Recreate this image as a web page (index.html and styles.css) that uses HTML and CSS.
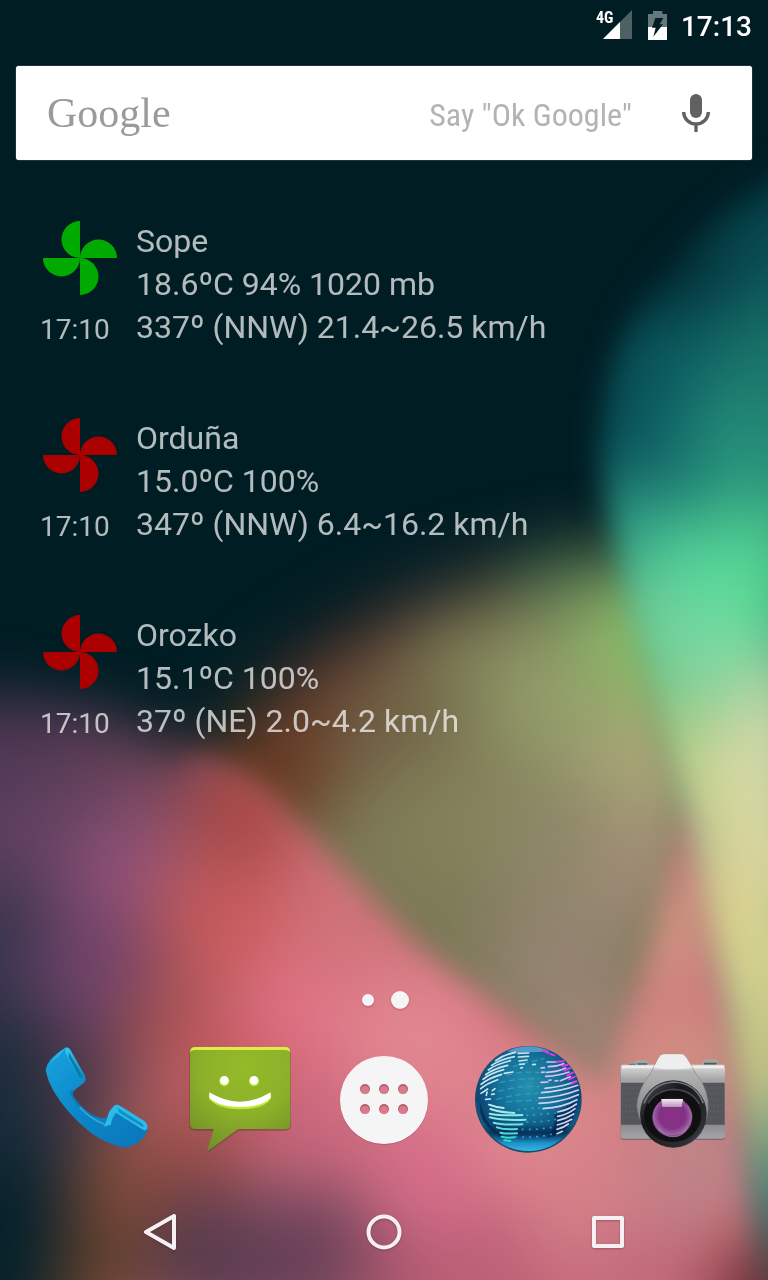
FILE: index.html
```html
<!DOCTYPE html>
<html lang="en">
<head>
<meta charset="utf-8">
<meta name="viewport" content="width=device-width, initial-scale=1">
<title>Home screen</title>
<link rel="stylesheet" href="styles.css">
</head>
<body>
<svg class="wallpaper" viewBox="0 0 768 1280" preserveAspectRatio="none" aria-hidden="true">
  <defs>
    <filter id="blend" filterUnits="userSpaceOnUse" x="-200" y="-200" width="1200" height="1700" color-interpolation-filters="sRGB"><feGaussianBlur stdDeviation="34"/></filter>
    <filter id="edge14" filterUnits="userSpaceOnUse" x="-200" y="-200" width="1200" height="1700"><feGaussianBlur stdDeviation="14"/></filter>
    <filter id="edge28" filterUnits="userSpaceOnUse" x="-200" y="-200" width="1200" height="1700"><feGaussianBlur stdDeviation="28"/></filter>
    <filter id="edge34" filterUnits="userSpaceOnUse" x="-200" y="-200" width="1200" height="1700"><feGaussianBlur stdDeviation="34"/></filter>
    <mask id="oliveMask" maskUnits="userSpaceOnUse" x="0" y="0" width="768" height="1280"><path filter="url(#edge34)" fill="#fff" d="M160 820Q210 710 330 640Q460 560 640 545L900 545V1400H160Z"/></mask>
    <mask id="tealMask" maskUnits="userSpaceOnUse" x="0" y="0" width="768" height="1280"><path filter="url(#edge14)" fill="#fff" d="M900 110Q740 170 654 280Q590 370 602 480Q615 570 650 680Q680 790 702 890Q735 1040 745 1160L765 1320H900Z"/></mask>
    <mask id="pinkMask" maskUnits="userSpaceOnUse" x="0" y="0" width="768" height="1280"><path filter="url(#edge28)" fill="#fff" d="M-100 695Q110 680 200 765L250 870L320 1000V1400H-100Z"/><path filter="url(#edge14)" fill="#fff" d="M190 755Q235 765 268 792L420 948L604 1085L640 980L690 810L900 700V1500H150V800Z"/></mask>
  </defs>
  <rect width="768" height="1280" fill="#001d24"/>
  <g mask="url(#oliveMask)">
    <g filter="url(#blend)">
      <rect x="-100" y="400" width="1000" height="1000" fill="#7d7957"/>
      <circle cx="190" cy="720" r="90" fill="#3c3026"/>
      <circle cx="310" cy="600" r="90" fill="#4e2a26"/>
      <circle cx="270" cy="770" r="70" fill="#693c25"/>
      <circle cx="340" cy="670" r="60" fill="#613c2e"/>
      <circle cx="450" cy="560" r="80" fill="#574437"/>
      <circle cx="400" cy="720" r="65" fill="#706045"/>
      <circle cx="480" cy="660" r="60" fill="#7c7c55"/>
      <circle cx="570" cy="550" r="70" fill="#628053"/>
      <circle cx="560" cy="700" r="75" fill="#929b69"/>
      <circle cx="655" cy="640" r="75" fill="#8bb967"/>
      <circle cx="640" cy="770" r="65" fill="#a9a577"/>
      <circle cx="470" cy="810" r="75" fill="#838159"/>
      <circle cx="560" cy="850" r="70" fill="#8d8768"/>
      <circle cx="640" cy="870" r="50" fill="#a48d79"/>
      <circle cx="560" cy="970" r="75" fill="#938371"/>
      <circle cx="600" cy="1050" r="55" fill="#a18377"/>
    </g>
  </g>
  <g mask="url(#pinkMask)">
    <g filter="url(#blend)">
      <rect x="-200" y="500" width="1200" height="900" fill="#cf707a"/>
      <rect x="-200" y="500" width="360" height="540" fill="#543b56"/>
      <rect x="-200" y="1030" width="270" height="450" fill="#0c2630"/>
      <circle cx="20" cy="710" r="90" fill="#493550"/>
      <circle cx="140" cy="730" r="80" fill="#583c50"/>
      <circle cx="160" cy="800" r="50" fill="#7d4a60"/>
      <circle cx="50" cy="830" r="70" fill="#60415f"/>
      <circle cx="-20" cy="960" r="80" fill="#36344c"/>
      <circle cx="118" cy="870" r="55" fill="#8e5078"/>
      <circle cx="90" cy="970" r="60" fill="#70436a"/>
      <circle cx="0" cy="1110" r="90" fill="#162b39"/>
      <circle cx="85" cy="1080" r="50" fill="#4f3849"/>
      <circle cx="0" cy="1260" r="90" fill="#04202a"/>
      <circle cx="130" cy="1190" r="64" fill="#7d4a38"/>
      <circle cx="100" cy="1280" r="50" fill="#61402a"/>
      <circle cx="245" cy="810" r="62" fill="#a74845"/>
      <circle cx="205" cy="920" r="60" fill="#bd5859"/>
      <circle cx="175" cy="1030" r="55" fill="#a65250"/>
      <circle cx="265" cy="930" r="55" fill="#cb5b5e"/>
      <circle cx="340" cy="930" r="60" fill="#cd7378"/>
      <circle cx="300" cy="1020" r="65" fill="#df7386"/>
      <circle cx="235" cy="1060" r="45" fill="#cb5c67"/>
      <circle cx="420" cy="1040" r="75" fill="#e18791"/>
      <circle cx="200" cy="1150" r="52" fill="#9b4d49"/>
      <circle cx="310" cy="1130" r="55" fill="#c8657d"/>
      <circle cx="220" cy="1260" r="75" fill="#573b4d"/>
      <circle cx="310" cy="1260" r="75" fill="#684158"/>
      <circle cx="400" cy="1275" r="50" fill="#a5546b"/>
      <circle cx="440" cy="1180" r="70" fill="#d56c89"/>
      <circle cx="540" cy="1130" r="75" fill="#de878e"/>
      <circle cx="500" cy="1275" r="65" fill="#ba6077"/>
      <circle cx="590" cy="1210" r="65" fill="#d58189"/>
      <circle cx="630" cy="1060" r="60" fill="#d18783"/>
      <circle cx="670" cy="920" r="65" fill="#cd9480"/>
      <circle cx="700" cy="1060" r="45" fill="#cf9782"/>
      <circle cx="700" cy="1170" r="60" fill="#bb8588"/>
      <circle cx="640" cy="1280" r="55" fill="#c0697a"/>
      <circle cx="775" cy="1300" r="65" fill="#6b2c33"/>
    </g>
  </g>
  <g mask="url(#tealMask)">
    <g filter="url(#blend)">
      <rect x="500" y="0" width="500" height="1400" fill="#1c7b6c"/>
      <circle cx="800" cy="260" r="90" fill="#0b555a"/>
      <circle cx="650" cy="310" r="90" fill="#053f47"/>
      <rect x="500" y="0" width="500" height="195" fill="#00252c"/>
      <circle cx="650" cy="220" r="80" fill="#001d24"/>
      <circle cx="730" cy="240" r="45" fill="#06424a"/>
      <circle cx="600" cy="420" r="65" fill="#043a44"/>
      <circle cx="680" cy="370" r="60" fill="#0a5b60"/>
      <circle cx="775" cy="370" r="70" fill="#19746a"/>
      <circle cx="650" cy="450" r="55" fill="#0c5b62"/>
      <circle cx="740" cy="450" r="60" fill="#25907a"/>
      <circle cx="640" cy="530" r="45" fill="#329d83"/>
      <circle cx="760" cy="540" r="50" fill="#4bc48b"/>
      <circle cx="690" cy="570" r="54" fill="#4ed09c"/>
      <circle cx="640" cy="620" r="50" fill="#72cb92"/>
      <circle cx="750" cy="600" r="50" fill="#5cdf95"/>
      <circle cx="700" cy="650" r="50" fill="#76d8a4"/>
      <circle cx="660" cy="720" r="45" fill="#9ed083"/>
      <circle cx="770" cy="690" r="42" fill="#b8dda3"/>
      <circle cx="760" cy="760" r="65" fill="#d4daab"/>
      <circle cx="690" cy="790" r="45" fill="#c9d28b"/>
      <circle cx="760" cy="860" r="70" fill="#dcd8a1"/>
      <circle cx="700" cy="900" r="50" fill="#d6c88a"/>
      <circle cx="760" cy="970" r="70" fill="#d9d38e"/>
      <circle cx="765" cy="1070" r="65" fill="#cdc687"/>
      <circle cx="770" cy="1150" r="45" fill="#8fa783"/>
      <circle cx="775" cy="1210" r="40" fill="#537674"/>
      <circle cx="780" cy="1290" r="55" fill="#6b2c33"/>
    </g>
  </g>
</svg>

<div class="screen">
  <header class="status">
    <div class="signal">
      <svg class="signal-icon" viewBox="0 0 29 29" aria-hidden="true"><path fill="#4d6165" d="M0 29L29 0V29Z"/><path fill="#fff" d="M0 29L17 12V29Z"/></svg>
      <span class="signal-label">4G</span>
    </div>
    <svg class="battery" viewBox="240 30 57 87" role="img" aria-label="Battery charging"><path fill="#66777b" d="M255 30H283V39H297V78H240V39H255Z"/><path fill="#fff" d="M240 78H297V117H240Z"/><path fill="#001d24" d="M262 51H286L275 70H285L256 107L263 80H252Z"/></svg>
    <time class="clock">17:13</time>
  </header>

  <form class="search" role="search">
    <label class="logo" for="query">Google</label>
    <input class="query" id="query" type="text" placeholder='Say "Ok Google"'>
    <button class="mic" type="button" aria-label="Voice search">
      <svg class="mic-icon" viewBox="888 108 96 126"><rect x="918" y="114" width="36" height="72" rx="18" fill="#616161"/><path d="M899 168A37 36 0 0 0 973 168M936 204V228" fill="none" stroke="#616161" stroke-width="10"/></svg>
    </button>
  </form>

  <main class="stations">
    <article class="station">
      <div class="side">
        <svg class="wheel good" viewBox="-40 -40 80 80" aria-hidden="true"><path d="M0 0A18 18 0 0 1 0-37ZM0 0A18 18 0 0 1 37 0ZM0 0A18 18 0 0 1 0 37ZM0 0A18 18 0 0 1-37 0Z"/></svg>
        <time class="taken">17:10</time>
      </div>
      <div class="report"><h2 class="name">Sope</h2><p class="line">18.6ºC 94% 1020 mb</p><p class="line">337º (NNW) 21.4~26.5 km/h</p></div>
    </article>
    <article class="station">
      <div class="side">
        <svg class="wheel bad" viewBox="-40 -40 80 80" aria-hidden="true"><path d="M0 0A18 18 0 0 1 0-37ZM0 0A18 18 0 0 1 37 0ZM0 0A18 18 0 0 1 0 37ZM0 0A18 18 0 0 1-37 0Z"/></svg>
        <time class="taken">17:10</time>
      </div>
      <div class="report"><h2 class="name">Orduña</h2><p class="line">15.0ºC 100%</p><p class="line">347º (NNW) 6.4~16.2 km/h</p></div>
    </article>
    <article class="station">
      <div class="side">
        <svg class="wheel bad" viewBox="-40 -40 80 80" aria-hidden="true"><path d="M0 0A18 18 0 0 1 0-37ZM0 0A18 18 0 0 1 37 0ZM0 0A18 18 0 0 1 0 37ZM0 0A18 18 0 0 1-37 0Z"/></svg>
        <time class="taken">17:10</time>
      </div>
      <div class="report"><h2 class="name">Orozko</h2><p class="line">15.1ºC 100%</p><p class="line">37º (NE) 2.0~4.2 km/h</p></div>
    </article>
  </main>

  <div class="pages"><span class="page"></span><span class="page current"></span></div>

  <section class="dock" aria-label="Favourites">
    <button class="app" type="button" aria-label="Phone">
      <svg class="app-icon" viewBox="3 0 390 420">
        <defs>
          <linearGradient id="ph1" x1="0" y1="0" x2="1" y2="1"><stop offset="0" stop-color="#18a3de"/><stop offset=".5" stop-color="#0c86c8"/><stop offset="1" stop-color="#0a75bb"/></linearGradient>
          <linearGradient id="ph2" x1="0" y1="0" x2="1" y2="1"><stop offset="0" stop-color="#35c8ee"/><stop offset="1" stop-color="#0b86c0"/></linearGradient>
        </defs>
        <path fill="url(#ph1)" d="M106 53Q113 50 120 58L164 136Q170 150 162 158L134 180Q126 188 130 198Q160 246 206 262Q226 270 233 257Q234 246 254 226Q260 222 270 227L344 274Q354 282 353 300Q340 330 320 340Q300 352 282 353Q230 342 184 310Q110 250 70 182Q54 154 47 122Q50 100 68 82Q86 64 106 53Z"/>
        <path fill="#29b4e6" d="M106 53Q70 76 47 122Q58 100 72 90Q92 78 106 53Z"/>
        <path fill="#0a5f9c" opacity=".45" d="M134 180Q126 188 130 198Q160 246 206 262Q180 264 150 236Q122 206 118 184Z"/>
        <path fill="url(#ph2)" d="M106 53Q116 50 120 58L164 136Q170 150 162 158Q152 156 146 142L106 68Z"/>
        <path fill="#0879ac" d="M117 68L154 132Q160 144 155 147Q148 142 143 132L116 80Z"/>
        <path fill="#35c5ec" d="M233 262Q234 246 254 226Q260 222 270 227L344 274Q354 282 352 296L344 302L258 248Q246 262 242 284L222 290Z" opacity=".85"/>
        <path fill="#0b91c8" d="M263 234L337 281Q343 287 340 292L268 248Z"/>
        <path fill="none" stroke="#49c5eb" stroke-width="5" stroke-linecap="round" opacity=".6" d="M150 232Q184 268 222 282"/>
      </svg>
    </button>
    <button class="app" type="button" aria-label="Messages">
      <svg class="app-icon" viewBox="0 0 390 420">
        <defs><radialGradient id="msg" cx=".55" cy=".2" r=".9"><stop offset="0" stop-color="#94ba29"/><stop offset=".5" stop-color="#8db02a"/><stop offset="1" stop-color="#6c8c26"/></radialGradient></defs>
        <path fill="#46301f" opacity=".35" d="M60 56H332Q348 56 348 70V286Q348 302 332 302H190L96 369L115 302H60Q43 302 43 286V70Z"/>
        <path fill="url(#msg)" d="M60 52H332Q346 52 346 68V282Q346 297 332 297H190L96 365L116 297H60Q45 297 45 282V68Q45 52 60 52Z"/>
        <path fill="#dcf042" d="M45 66Q47 51 60 51H332Q344 51 346 66Q340 60 330 60H60Q50 60 45 66Z"/>
        <path fill="#b9ed2d" d="M102 191Q194 246 288 191V206Q266 238 194 238Q126 236 102 206Z"/>
        <g fill="#b9ed2d"><circle cx="148" cy="154" r="15"/><circle cx="237" cy="154" r="15"/></g>
        <g fill="#fff"><circle cx="148" cy="151" r="13"/><circle cx="237" cy="151" r="13"/><path d="M103 187Q194 243 287 187V203Q262 231 194 231Q128 229 103 203Z"/></g>
      </svg>
    </button>
    <button class="app" type="button" aria-label="All apps">
      <svg class="app-icon" viewBox="319 1030 130 140">
        <circle cx="384" cy="1101" r="44" fill="#8c3048" opacity=".3"/>
        <circle cx="384" cy="1100" r="44" fill="#f5f5f5"/>
        <g fill="#b5606f"><circle cx="365" cy="1089" r="5"/><circle cx="384" cy="1089" r="5"/><circle cx="403" cy="1089" r="5"/><circle cx="365" cy="1109" r="5"/><circle cx="384" cy="1109" r="5"/><circle cx="403" cy="1109" r="5"/></g>
        <g fill="#d97b8b"><circle cx="365" cy="1090" r="4"/><circle cx="384" cy="1090" r="4"/><circle cx="403" cy="1090" r="4"/><circle cx="365" cy="1110" r="4"/><circle cx="384" cy="1110" r="4"/><circle cx="403" cy="1110" r="4"/></g>
      </svg>
    </button>
    <button class="app" type="button" aria-label="Browser">
      <svg class="app-icon" viewBox="0 0 390 420">
        <defs>
          <radialGradient id="gl" cx=".5" cy=".38" r=".62"><stop offset="0" stop-color="#2590ac"/><stop offset=".45" stop-color="#157399"/><stop offset=".8" stop-color="#0b4775"/><stop offset="1" stop-color="#1a6ca2"/></radialGradient>
          <linearGradient id="glb" x1="0" y1="0" x2="0" y2="1"><stop offset=".74" stop-color="#03284e" stop-opacity="0"/><stop offset=".83" stop-color="#03284e" stop-opacity=".75"/><stop offset=".92" stop-color="#1c8ec8"/><stop offset="1" stop-color="#35b9e2"/></linearGradient>
          <linearGradient id="land" gradientUnits="userSpaceOnUse" x1="0" y1="220" x2="0" y2="335"><stop offset="0" stop-color="#c4f0f4"/><stop offset="1" stop-color="#2fd6cb"/></linearGradient>
        </defs>
        <circle cx="196" cy="208" r="160" fill="#1b4c66"/>
        <circle cx="196" cy="206" r="157" fill="url(#gl)"/>
        <circle cx="196" cy="206" r="157" fill="url(#glb)"/>
        <path fill="#71afe0" opacity=".7" d="M132 64Q196 34 260 64Q196 70 132 64Z"/>
        <path fill="#02203f" opacity=".6" d="M52 220Q66 290 130 324Q90 316 62 274Q48 246 52 220ZM272 250Q318 230 340 210Q338 270 300 306Q276 320 250 324Q284 290 272 250Z"/>
        <g fill="none" stroke="#3aa0d8" stroke-width="4" stroke-dasharray="18 11" opacity=".75">
          <path d="M110 158Q170 144 230 146"/><path d="M106 184Q170 166 230 170"/><path d="M100 208Q170 190 226 190"/><path d="M130 136Q180 122 230 128"/><path d="M150 110Q196 96 244 86"/><path d="M130 216Q180 210 222 212"/>
        </g>
        <g fill="none" stroke="#3fa9e2" stroke-width="5" stroke-dasharray="6 15" opacity=".8">
          <path d="M164 240Q210 232 270 234"/><path d="M190 256Q230 252 280 250"/><path d="M190 276Q240 276 280 268"/><path d="M176 298Q230 300 276 290"/><path d="M156 320Q220 326 276 310"/>
        </g>
        <g fill="none" stroke="#c6e6f4" stroke-width="5" stroke-linecap="round">
          <path d="M98 92Q122 74 158 67"/><path d="M86 106Q112 88 154 80"/><path d="M76 120Q98 103 142 92"/><path d="M68 134Q92 116 134 106"/><path d="M60 148Q84 129 122 119"/><path d="M124 130L150 126"/><path d="M54 163Q78 144 116 133"/><path d="M53 176Q72 160 104 149"/><path d="M54 190L74 177"/><path d="M70 196L72 186M88 182L96 176M68 208L82 207M86 193L94 192"/>
          <path d="M165 70L197 69M166 81L196 79M168 93L192 90M170 103L184 102M173 114L178 113M209 104L217 103"/>
          <path stroke="#dfc0f4" d="M252 96L280 96M256 110Q280 110 302 101M234 114L244 113M236 127L244 126M250 127Q284 126 308 114M248 139Q286 138 318 126M258 151L264 150M276 153L284 152M234 157L254 156M292 152L322 140"/>
          <path stroke="#d0d2f2" d="M246 175Q300 170 340 154M236 188Q294 184 344 166M228 204Q290 202 346 180M228 220Q290 218 346 194M240 236Q300 232 342 209M284 246Q320 238 340 222M284 259Q314 254 336 236M284 272Q310 266 332 252M283 285Q306 280 326 268M282 298Q300 294 316 282M282 311L298 304"/>
        </g>
        <g fill="none" stroke="#df36ee" stroke-width="6" stroke-linecap="round"><path d="M240 61L256 69M262 72L274 76M280 95L302 94M298 108L314 104M304 122L322 114M312 137L330 128M318 148L336 140M326 161L340 154"/></g>
        <g fill="none" stroke="url(#land)" stroke-width="6" stroke-linecap="round"><path d="M78 224Q98 232 122 234"/><path d="M82 237Q110 247 154 249"/><path d="M80 251Q114 258 178 255"/><path d="M80 262Q116 272 188 269"/><path d="M92 278Q120 286 178 283"/><path d="M102 292Q124 300 162 297"/><path d="M112 308Q130 312 162 310"/><path d="M116 320Q130 325 154 322"/><path d="M124 331L142 333"/></g>
      </svg>
    </button>
    <button class="app" type="button" aria-label="Camera">
      <svg class="app-icon" viewBox="-3 0 390 420">
        <defs>
          <linearGradient id="cb" x1="0" y1="0" x2="0" y2="1"><stop offset="0" stop-color="#dedede"/><stop offset=".2" stop-color="#a5a5a7"/><stop offset=".8" stop-color="#8b8b8e"/><stop offset="1" stop-color="#a5a5a9"/></linearGradient>
          <linearGradient id="ct" x1="0" y1="0" x2="0" y2="1"><stop offset="0" stop-color="#fafafa"/><stop offset=".14" stop-color="#e8e8e8"/><stop offset=".2" stop-color="#b4b4b4"/><stop offset="1" stop-color="#6e6e70"/></linearGradient>
          <linearGradient id="ring" x1="0" y1="0" x2="1" y2="1"><stop offset="0" stop-color="#55575b"/><stop offset=".35" stop-color="#17181a"/><stop offset=".8" stop-color="#2d2e30"/><stop offset="1" stop-color="#5560a0"/></linearGradient>
          <radialGradient id="lens" cx=".5" cy=".45" r=".55"><stop offset="0" stop-color="#8b2f83"/><stop offset=".6" stop-color="#823285"/><stop offset=".88" stop-color="#a264a5"/><stop offset="1" stop-color="#342038"/></radialGradient>
          <linearGradient id="glint" x1="0" y1="0" x2="0" y2="1"><stop offset="0" stop-color="#f4edf4"/><stop offset="1" stop-color="#bc91bc"/></linearGradient>
        </defs>
        <path fill="#a5a5a6" d="M60 104Q60 97 68 97H82Q82 90 90 90H114Q122 90 122 100V108H60ZM284 106V96Q284 88 292 88H320Q330 88 330 98V106Z"/>
        <path fill="#555659" d="M62 101H83V110H62ZM88 100H118V105H88ZM288 98H326V104H288Z"/>
        <rect x="38" y="105" width="313" height="224" rx="7" fill="#6e5c68"/>
        <rect x="38" y="104" width="313" height="222" rx="7" fill="url(#cb)"/>
        <path stroke="#eee" stroke-width="8" d="M43 111H347"/>
        <path fill="#55565c" d="M39 158H350V284H39Z"/>
        <path fill="none" stroke="#64656d" stroke-width="3" stroke-dasharray="4 7" d="M42 174H348M42 190H348M42 208H348M42 226H348M42 244H348M42 262H348"/>
        <path fill="url(#ct)" stroke="#858585" stroke-width="2" d="M166 73H222Q230 74 238 88L270 140Q304 184 300 240Q296 300 244 330H150Q96 300 87 230Q88 180 126 132L152 84Q158 74 166 73Z"/>
        <path fill="#eee" d="M166 73H222Q230 74 238 88L253 113Q196 122 137 113L152 84Q158 74 166 73Z"/>
        <ellipse cx="196" cy="252" rx="100" ry="101" fill="url(#ring)"/>
        <path fill="none" stroke="#737b86" stroke-width="5" d="M108 220Q132 160 198 156Q264 160 286 220"/>
        <ellipse cx="194" cy="256" rx="86" ry="80" fill="#101012"/>
        <path fill="none" stroke="#44464a" stroke-width="5" d="M120 220Q145 180 198 178Q250 180 274 222"/>
        <circle cx="193" cy="262" r="60" fill="url(#lens)"/>
        <path fill="#1a1a1c" d="M148 230Q158 200 194 200Q230 200 240 230L224 208H160Z"/>
        <path fill="url(#glint)" d="M160 207H225L221 231H163Z"/>
        <path fill="none" stroke="#b08bb4" stroke-width="4" opacity=".6" d="M150 294Q170 320 196 320Q224 320 240 290"/>
      </svg>
    </button>
  </section>

  <nav class="keys" aria-label="System">
    <button class="key" type="button" aria-label="Back"><svg class="key-icon" viewBox="0 0 48 48"><path d="M38 8V40L10 24Z"/></svg></button>
    <button class="key" type="button" aria-label="Home"><svg class="key-icon" viewBox="0 0 48 48"><circle cx="24" cy="24" r="15.500"/></svg></button>
    <button class="key" type="button" aria-label="Recent apps"><svg class="key-icon" viewBox="0 0 48 48"><rect x="10" y="10" width="28" height="28"/></svg></button>
  </nav>
</div>
</body>
</html>
```
FILE: styles.css
```css
* { box-sizing: border-box; }
body {
  margin: 0;
  background: #001d24;
  color: #fff;
  font-family: Roboto, "Liberation Sans", sans-serif;
}
button {
  padding: 0;
  border: 0;
  background: none;
  cursor: pointer;
}
.wallpaper {
  position: fixed;
  inset: 0;
  width: 100%;
  height: 100%;
}
.screen {
  position: relative;
  display: flex;
  flex-direction: column;
  min-height: 100vh;
}
.status {
  display: flex;
  justify-content: flex-end;
  align-items: center;
  height: 50px;
  padding: 0 16px;
}
.signal {
  position: relative;
  width: 36px;
  height: 30px;
  margin-right: 16px;
}
.signal-icon {
  display: block;
  width: 29px;
  height: 29px;
  margin-left: auto;
}
.signal-label {
  position: absolute;
  left: 0;
  top: 0;
  font: 700 16px/16px "Roboto Condensed", Roboto, sans-serif;
}
.battery {
  width: 19px;
  height: 29px;
  margin-right: 14px;
}
.clock {
  padding-top: 3px;
  font-weight: 500;
  font-size: 28px;
  line-height: 32px;
}
.search {
  display: flex;
  align-items: center;
  height: 94px;
  margin: 16px 16px 0;
  padding: 0 40px 0 31px;
  border-radius: 3px;
  background: #fff;
  box-shadow: 0 0 1px #fff;
}
.logo {
  color: #9a9a9a;
  font: 42px/48px "Liberation Serif", serif;
}
.query {
  flex: 1;
  min-width: 0;
  padding: 3px 0 0;
  border: 0;
  outline: 0;
  background: none;
  color: #616161;
  font: 32px/40px "Roboto Condensed", Roboto, sans-serif;
  text-align: right;
}
.query::placeholder {
  color: #b3b3b3;
  opacity: 1;
}
.mic { margin-left: 48px; }
.mic-icon {
  display: block;
  width: 32px;
  height: 42px;
}
.stations {
  display: flex;
  flex: 1;
  flex-direction: column;
  gap: 65px;
  padding: 58px 40px 24px;
  color: rgba(255, 255, 255, .7);
}
.station { display: flex; }
.side {
  display: flex;
  flex-direction: column;
  flex: none;
  gap: 12px;
  width: 96px;
}
.wheel {
  width: 80px;
  height: 80px;
}
.good { fill: #0a0; }
.bad { fill: #a00; }
.taken {
  font-size: 28px;
  line-height: 40px;
}
.report { padding-top: 2px; }
.name,
.line {
  margin: 0;
  font-weight: 400;
  font-size: 32px;
  line-height: 43px;
}
.pages {
  display: flex;
  justify-content: center;
  align-items: center;
  gap: 17px;
  height: 24px;
  margin-bottom: 16px;
  padding-left: 2px;
}
.page {
  width: 12px;
  height: 12px;
  border-radius: 50%;
  background: #f5f5f5;
  box-shadow: 0 1px 2px rgba(80, 20, 30, .3);
}
.current {
  width: 18px;
  height: 18px;
}
.dock {
  display: grid;
  grid-template-columns: repeat(5, 1fr);
  align-items: center;
  height: 144px;
  margin: 0 24px 12px;
}
.app,
.key {
  display: grid;
  place-items: center;
}
.app-icon {
  width: 130px;
  height: 140px;
}
.keys {
  display: grid;
  grid-template-columns: repeat(3, 1fr);
  height: 96px;
  padding: 0 48px;
}
.key-icon {
  width: 48px;
  height: 48px;
  fill: none;
  stroke: #f5f0f2;
  stroke-width: 4;
  stroke-linejoin: round;
  filter: drop-shadow(0 1px 1px rgba(60, 10, 30, .3));
}
```
